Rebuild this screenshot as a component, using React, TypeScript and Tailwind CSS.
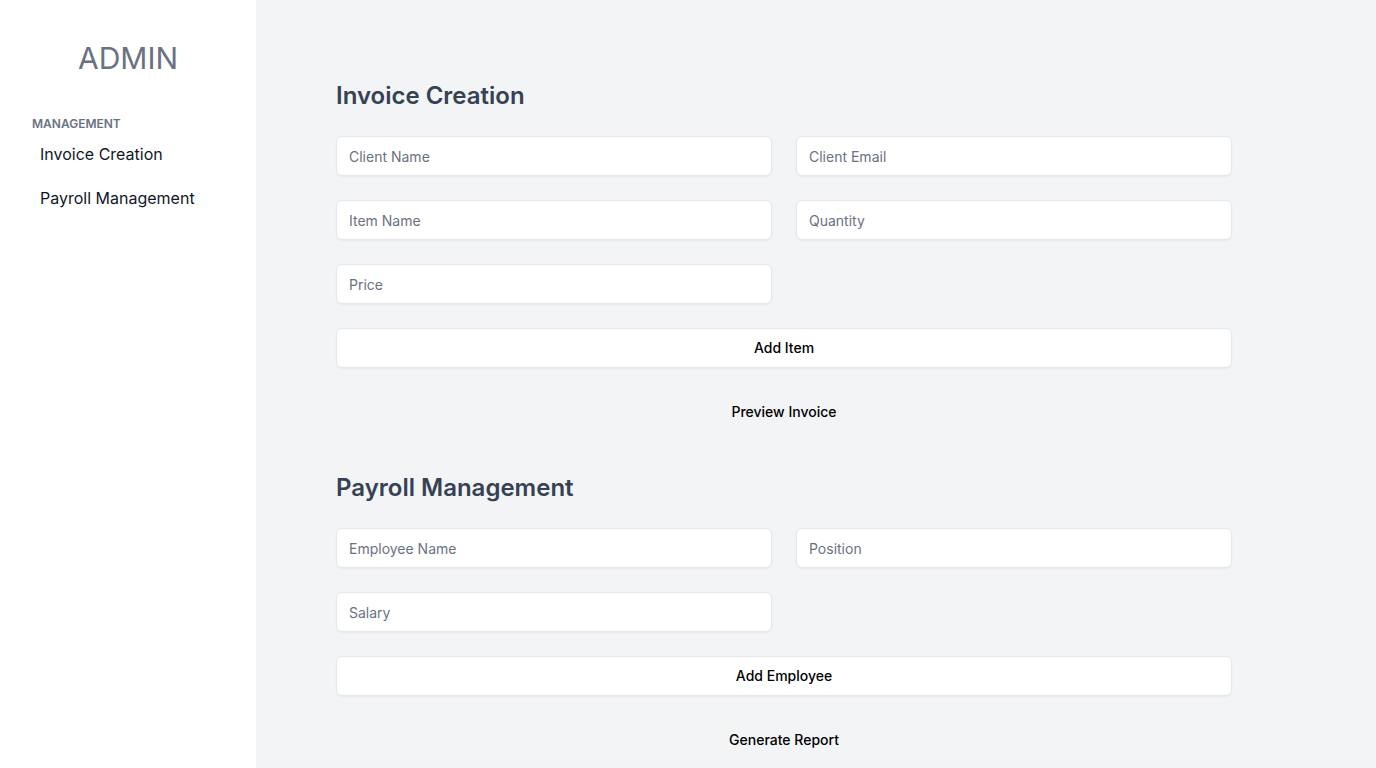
import React from "react";

const inputCls =
  "h-10 w-full rounded-md border border-gray-200 bg-white px-3 text-[14px] text-gray-900 placeholder:text-gray-500 shadow-xs outline-none";

function Field({ placeholder }: { placeholder: string }) {
  return <input className={inputCls} placeholder={placeholder} />;
}

export default function App() {
  return (
    <div
      className="flex min-h-screen w-full bg-gray-100"
      style={{ fontFamily: "Inter, 'Noto Sans', sans-serif" }}
    >
      <aside className="w-64 shrink-0 bg-white pt-10">
        <div className="text-center text-[30px] leading-9 text-gray-500">ADMIN</div>
        <div className="mt-10 px-8">
          <div className="text-xs font-semibold uppercase leading-4 text-gray-500">Management</div>
          <nav className="flex flex-col">
            <a className="block px-2 py-2.5 text-base leading-6 text-gray-900">Invoice Creation</a>
            <a className="block px-2 py-2.5 text-base leading-6 text-gray-900">Payroll Management</a>
          </nav>
        </div>
      </aside>
      <main className="flex-1 p-20">
        <div className="w-[896px]">
          <section>
            <h2 className="mb-6 text-2xl font-semibold leading-8 text-gray-700">Invoice Creation</h2>
            <div className="grid grid-cols-2 gap-6">
              <Field placeholder="Client Name" />
              <Field placeholder="Client Email" />
              <Field placeholder="Item Name" />
              <Field placeholder="Quantity" />
              <Field placeholder="Price" />
              <div />
              <button className="col-span-2 h-10 rounded-md border border-gray-200 bg-white text-sm font-medium text-black shadow-xs">
                Add Item
              </button>
              <button className="col-span-2 h-10 text-sm font-medium text-black">Preview Invoice</button>
            </div>
          </section>
          <section className="mt-10">
            <h2 className="mb-6 text-2xl font-semibold leading-8 text-gray-700">Payroll Management</h2>
            <div className="grid grid-cols-2 gap-6">
              <Field placeholder="Employee Name" />
              <Field placeholder="Position" />
              <Field placeholder="Salary" />
              <div />
              <button className="col-span-2 h-10 rounded-md border border-gray-200 bg-white text-sm font-medium text-black shadow-xs">
                Add Employee
              </button>
              <button className="col-span-2 h-10 text-sm font-medium text-black">Generate Report</button>
            </div>
          </section>
        </div>
      </main>
    </div>
  );
}
